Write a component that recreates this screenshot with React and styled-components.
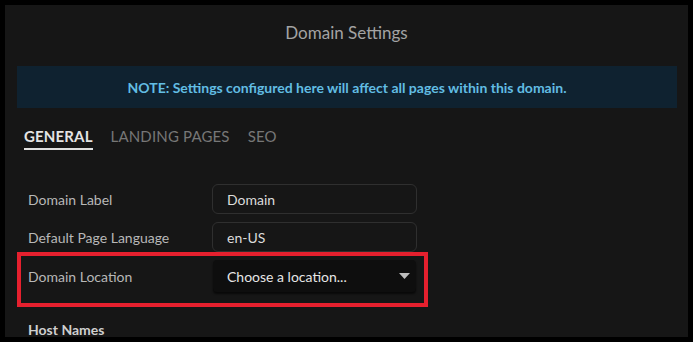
import React from "react";
import styled, { createGlobalStyle } from "styled-components";

const Global = createGlobalStyle`
  html, body { margin: 0; padding: 0; background: #000; }
  body { font-family: Lato, "Open Sans", sans-serif; }
  * { box-sizing: border-box; }
`;

const Page = styled.div`
  width: 693px;
  height: 342px;
  padding: 5px;
  background: #000;
  overflow: hidden;
`;

const Panel = styled.div`
  width: 683px;
  height: 332px;
  background: #161616;
  overflow: hidden;
`;

const Title = styled.h1`
  margin: 0;
  padding-top: 18px;
  height: 61px;
  font-size: 17px;
  line-height: 20px;
  font-weight: 400;
  color: #a3a3a3;
  text-align: center;
`;

const Note = styled.div`
  margin: 0 11px 0 12px;
  height: 42px;
  background: #0f2230;
  color: #62bde3;
  font-size: 14px;
  font-weight: 700;
  display: flex;
  align-items: center;
  justify-content: center;
`;

const Tabs = styled.div`
  display: flex;
  gap: 18px;
  padding: 19px 0 0 19px;
  height: 76px;
`;

const Tab = styled.div`
  font-size: 15px;
  line-height: 18px;
  font-weight: ${(p) => (p.$active ? 700 : 400)};
  color: ${(p) => (p.$active ? "#e4e4e4" : "#777")};
  letter-spacing: 0.15px;
  align-self: flex-start;
  padding-bottom: 3px;
  border-bottom: 2px solid ${(p) => (p.$active ? "#e0e0e0" : "transparent")};
`;

const Form = styled.div`
  display: flex;
  flex-direction: column;
`;

const Row = styled.div`
  display: grid;
  grid-template-columns: 184px 205px;
  align-items: center;
  padding-left: 23px;
  margin-bottom: ${(p) => p.$mb || 0}px;
`;

const Highlight = styled.div`
  display: grid;
  grid-template-columns: 185px 203px;
  align-items: center;
  margin-left: 12px;
  width: 411px;
  height: 55px;
  border: 4px solid #e5202e;
  padding: 4px 0 11px 7px;
`;

const Label = styled.div`
  font-size: 14px;
  color: #b8b8b8;
`;

const Input = styled.div`
  height: 30px;
  border: 1px solid #2f2f2f;
  border-radius: 6px;
  padding-left: 14px;
  display: flex;
  align-items: center;
  font-size: 14px;
  color: #dcdcdc;
`;

const Select = styled.div`
  height: 32px;
  border-radius: 4px;
  background: #0e0e0e;
  box-shadow: 0 2px 2px rgba(0, 0, 0, 0.6);
  padding: 0 6px 0 14px;
  display: flex;
  align-items: center;
  justify-content: space-between;
  font-size: 14px;
  color: #e6e6e6;
`;

const Caret = styled.svg`
  width: 11px;
  height: 6px;
`;

const Section = styled.div`
  padding: 14px 0 0 23px;
  font-size: 14px;
  font-weight: 700;
  color: #cfcfcf;
`;

export default function App() {
  return (
    <>
      <Global />
      <Page>
        <Panel>
          <Title>Domain Settings</Title>
          <Note>NOTE: Settings configured here will affect all pages within this domain.</Note>
          <Tabs>
            <Tab $active>GENERAL</Tab>
            <Tab>LANDING PAGES</Tab>
            <Tab>SEO</Tab>
          </Tabs>
          <Form>
            <Row $mb={8}>
              <Label>Domain Label</Label>
              <Input>Domain</Input>
            </Row>
            <Row>
              <Label>Default Page Language</Label>
              <Input>en-US</Input>
            </Row>
            <Highlight>
              <Label>Domain Location</Label>
              <Select>
                Choose a location...
                <Caret viewBox="0 0 11 6">
                  <path d="M0 0 H11 L5.5 6 Z" fill="#bdbdbd" />
                </Caret>
              </Select>
            </Highlight>
            <Section>Host Names</Section>
          </Form>
        </Panel>
      </Page>
    </>
  );
}
